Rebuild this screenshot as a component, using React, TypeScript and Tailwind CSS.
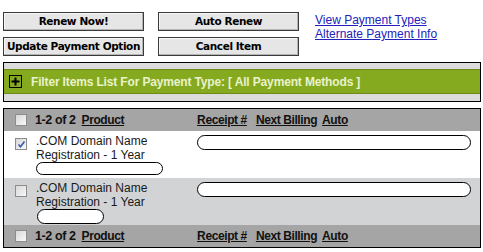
const font = { fontFamily: '"Liberation Sans", Arial, sans-serif' };

function Btn({ label }: { label: string }) {
  return (
    <button className="h-[19px] w-[141px] whitespace-nowrap border border-[#3a3a3a] bg-[#e6e6e6] shadow-[inset_-1px_-1px_0_#b4b4b4,inset_1px_1px_0_#f6f6f6] text-[10.5px] font-bold text-black leading-none [font-family:'DejaVu_Sans',Verdana,sans-serif] tracking-[-0.4px]">
      {label}
    </button>
  );
}

function Check({ checked }: { checked?: boolean }) {
  return (
    <div className="w-[12px] h-[12px] border border-[#8c8c8c] bg-gradient-to-br from-[#d8d8d8] to-[#f8f8f8] flex items-center justify-center">
      {checked && (
        <svg width="9" height="9" viewBox="0 0 9 9">
          <path d="M1.5 4.5 L3.5 6.8 L7.5 1.5" fill="none" stroke="#3c55b0" strokeWidth="1.6" />
        </svg>
      )}
    </div>
  );
}

function Pill({ className }: { className: string }) {
  return <div className={`bg-white border border-black rounded-full ${className}`} />;
}

function HeaderRow() {
  return (
    <div className="h-[22px] bg-[#a5a5a5] flex items-center text-[12px] font-bold text-[#111] tracking-[-0.4px]">
      <div className="ml-[11px]">
        <Check />
      </div>
      <span className="ml-[8px] text-[12.5px]">1-2 of 2</span>
      <span className="ml-[6px] underline">Product</span>
      <span className="ml-[73px] underline">Receipt #</span>
      <span className="ml-[9px] underline">Next Billing</span>
      <span className="ml-[5px] underline">Auto</span>
    </div>
  );
}

function ItemRow({ checked, bg, small }: { checked?: boolean; bg: string; small: string }) {
  return (
    <div className={`h-[47px] flex ${bg}`}>
      <div className="ml-[11px] pt-[7px]">
        <Check checked={checked} />
      </div>
      <div className="ml-[9px] w-[161px] pt-[3px] text-[12px] leading-[14px] text-[#1a1a1a]">
        <div>.COM Domain Name</div>
        <div>Registration - 1 Year</div>
        <Pill className={small} />
      </div>
      <div className="pt-[4px]">
        <Pill className="w-[274px] h-[15px]" />
      </div>
    </div>
  );
}

export default function App() {
  return (
    <div className="w-[483px] h-[252px] bg-white overflow-hidden pt-[12px] pl-[3px]" style={font}>
      <div className="flex">
        <div className="grid grid-cols-[141px_141px] gap-x-[14px] gap-y-[6px]">
          <Btn label="Renew Now!" />
          <Btn label="Auto Renew" />
          <Btn label="Update Payment Option" />
          <Btn label="Cancel Item" />
        </div>
        <div className="ml-[16px] mt-[1px] flex flex-col text-[12px] leading-[14px] text-[#2222bb]">
          <a className="underline">View Payment Types</a>
          <a className="underline">Alternate Payment Info</a>
        </div>
      </div>

      <div className="mt-[6px] w-[478px] border border-black">
        <div className="h-[6px] bg-[#dcdcdc]" />
        <div className="h-[25px] bg-[#86aa1f] border-y border-[#6d8a18] flex items-center">
          <div className="ml-[5px] w-[13px] h-[13px] border border-black flex items-center justify-center">
            <svg width="9" height="9" viewBox="0 0 9 9">
              <path d="M4.5 0.5 V8.5 M0.5 4.5 H8.5" stroke="#000" strokeWidth="2" />
            </svg>
          </div>
          <span className="ml-[9px] text-[12px] font-bold text-[#eaf2cc] tracking-[-0.15px]">
            Filter Items List For Payment Type: [ All Payment Methods ]
          </span>
        </div>
        <div className="h-[7px] bg-[#dcdcdc]" />
      </div>

      <div className="mt-[6px] w-[478px] border border-black">
        <HeaderRow />
        <ItemRow checked bg="bg-white" small="w-[127px] h-[13px]" />
        <ItemRow bg="bg-[#d1d3d4]" small="w-[67px] h-[15px] ml-[1px]" />
        <HeaderRow />
      </div>
    </div>
  );
}
